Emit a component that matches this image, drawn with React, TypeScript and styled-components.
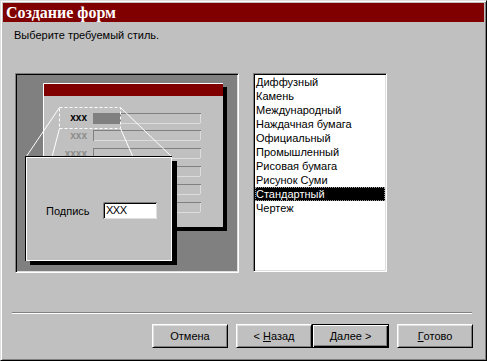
import React from "react";
import styled, { createGlobalStyle } from "styled-components";

const GlobalStyle = createGlobalStyle`
  html, body {
    margin: 0;
    padding: 0;
    background: #c0c0c0;
  }
  * {
    box-sizing: border-box;
  }
`;

const Window = styled.div`
  width: 487px;
  height: 361px;
  display: flex;
  flex-direction: column;
  background: #c0c0c0;
  border: 1px solid;
  border-color: #dfdfdf #000 #000 #dfdfdf;
  box-shadow: inset 1px 1px #fff, inset -1px -1px #808080;
  padding: 2px;
  font-family: "Liberation Sans", Arial, sans-serif;
  font-size: 11px;
  color: #000;
`;

const TitleBar = styled.div`
  height: 19px;
  line-height: 19px;
  background: #800000;
  color: #fff;
  padding-left: 3px;
  font-family: "Liberation Serif", "Times New Roman", serif;
  font-weight: bold;
  font-size: 16px;
`;

const Prompt = styled.div`
  margin: 7px 0 0 11px;
  height: 13px;
  line-height: 13px;
`;

const Content = styled.div`
  display: flex;
  gap: 14px;
  margin: 31px 0 0 12px;
`;

const Sunken = styled.div`
  border: 1px solid;
  border-color: #808080 #fff #fff #808080;
  box-shadow: inset 1px 1px #000, inset -1px -1px #dfdfdf;
  padding: 1px;
`;

const Preview = styled(Sunken)`
  width: 224px;
  height: 200px;
  background: #808080;
`;

const ListBox = styled(Sunken)`
  width: 134px;
  height: 199px;
  background: #fff;
  display: flex;
  flex-direction: column;
`;

const Item = styled.div<{ $selected?: boolean }>`
  height: 14px;
  line-height: 14px;
  padding-left: 1px;
  white-space: nowrap;
  background: ${(p) => (p.$selected ? "#000" : "transparent")};
  color: ${(p) => (p.$selected ? "#fff" : "#000")};
  outline: ${(p) => (p.$selected ? "1px dotted #9a9a9a" : "none")};
  outline-offset: -1px;
`;

const Separator = styled.div`
  margin: 39px 12px 0 9px;
  height: 2px;
  border-top: 1px solid #808080;
  border-bottom: 1px solid #fff;
`;

const ButtonRow = styled.div`
  display: flex;
  justify-content: flex-end;
  margin: 10px 11px 0 0;
`;

const Button = styled.div<{ $default?: boolean; $gap?: number }>`
  width: ${(p) => (p.$default ? 77 : 76)}px;
  height: 24px;
  margin-left: ${(p) => p.$gap ?? 0}px;
  display: flex;
  align-items: center;
  justify-content: center;
  border: 1px solid;
  border-color: ${(p) => (p.$default ? "#000" : "#fff #000 #000 #fff")};
  box-shadow: ${(p) =>
    p.$default
      ? "inset 1px 1px #fff, inset -1px -1px #000, inset -2px -2px #808080"
      : "inset 1px 1px #dfdfdf, inset -1px -1px #808080"};
  background: #c0c0c0;
`;

const Key = styled.span`
  text-decoration: underline;
`;

const styles = [
  "Диффузный",
  "Камень",
  "Международный",
  "Наждачная бумага",
  "Официальный",
  "Промышленный",
  "Рисовая бумага",
  "Рисунок Суми",
  "Стандартный",
  "Чертеж",
];

const fieldRows = [113, 130, 148, 166, 184, 202];

function StylePreview() {
  return (
    <svg width="220" height="196" viewBox="17 75 220 196" style={{ display: "block" }}>
      {/* back form */}
      <rect x="47" y="87" width="180" height="144" fill="#000" />
      <rect x="43" y="83" width="180" height="144" fill="#c0c0c0" />
      <path d="M43.5 227 V83.5 H223" stroke="#fff" fill="none" />
      <rect x="44" y="84" width="179" height="12" fill="#800000" />
      {fieldRows.map((y) => (
        <g key={y}>
          <rect x="93.5" y={y + 0.5} width="107" height="10" fill="none" stroke="#808080" />
          <path d={`M94 ${y + 10.5} H200.5 V${y + 1}`} stroke="#dcdcdc" fill="none" />
        </g>
      ))}
      <rect x="93" y="113" width="28" height="11" fill="#808080" />
      <g fontFamily="'Liberation Sans', Arial, sans-serif" fontWeight="bold" fontSize="10" textAnchor="end">
        <text x="87" y="121" fill="#000">xxx</text>
        <text x="87" y="139" fill="#8c8c8c">xxx</text>
        <text x="87" y="157" fill="#8c8c8c">xxxx</text>
      </g>
      {/* zoom selection */}
      <rect x="59.5" y="107.5" width="61" height="21" fill="none" stroke="#fff" strokeDasharray="3 2" />
      <g stroke="#fff" fill="none">
        <line x1="59.5" y1="107.5" x2="26" y2="157" />
        <line x1="59.5" y1="128.5" x2="52" y2="157" />
        <line x1="120.5" y1="107.5" x2="172" y2="157" />
        <line x1="120.5" y1="128.5" x2="133" y2="157" />
      </g>
      {/* front form */}
      <rect x="30" y="161" width="147" height="104" fill="#000" />
      <rect x="25" y="156" width="147" height="105" fill="#000" />
      <rect x="26.5" y="157.5" width="145" height="103" fill="#c0c0c0" stroke="#fff" />
      <text x="46" y="215" fontFamily="'Liberation Sans', Arial, sans-serif" fontSize="11" fill="#000">
        Подпись
      </text>
      <rect x="103" y="202" width="54" height="17" fill="#fff" />
      <path d="M103.5 219 V202.5 H157" stroke="#808080" fill="none" />
      <path d="M104.5 218 V203.5 H156" stroke="#000" fill="none" />
      <path d="M104 218.5 H156.5 V203" stroke="#dfdfdf" fill="none" />
      <text
        x="106"
        y="214"
        fontFamily="'Liberation Sans', Arial, sans-serif"
        fontSize="11"
        letterSpacing="-0.5"
        fill="#000"
      >
        XXX
      </text>
    </svg>
  );
}

export default function App() {
  return (
    <>
      <GlobalStyle />
      <Window>
        <TitleBar>Создание форм</TitleBar>
        <Prompt>Выберите требуемый стиль.</Prompt>
        <Content>
          <Preview>
            <StylePreview />
          </Preview>
          <ListBox>
            {styles.map((s) => (
              <Item key={s} $selected={s === "Стандартный"}>
                {s}
              </Item>
            ))}
          </ListBox>
        </Content>
        <Separator />
        <ButtonRow>
          <Button>Отмена</Button>
          <Button $gap={8}>
            &lt;&nbsp;<Key>Н</Key>азад
          </Button>
          <Button $default>
            <Key>Д</Key>алее&nbsp;&gt;
          </Button>
          <Button $gap={8}>
            <Key>Г</Key>отово
          </Button>
        </ButtonRow>
      </Window>
    </>
  );
}
